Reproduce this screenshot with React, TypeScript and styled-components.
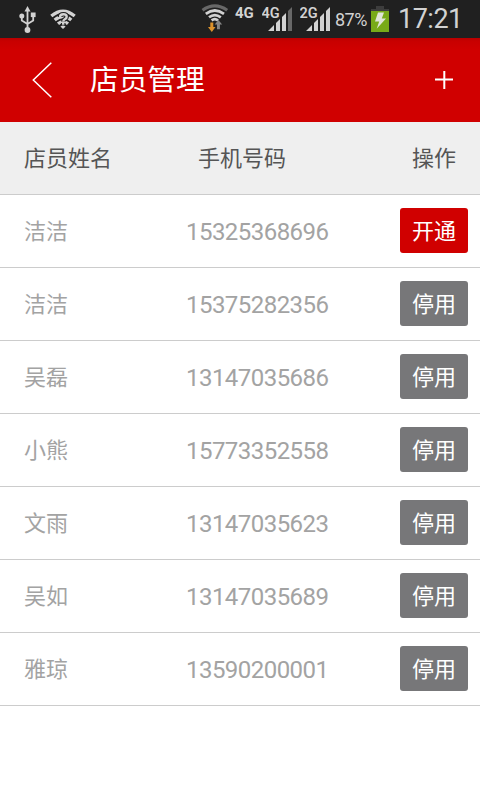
import React from "react";
import styled, { createGlobalStyle } from "styled-components";

const Global = createGlobalStyle`
  * { box-sizing: border-box; }
  body { margin: 0; background: #fff; font-family: Roboto, "Noto Sans CJK SC", sans-serif; }
`;

const Screen = styled.div`
  width: 480px;
  height: 800px;
  background: #fff;
  overflow: hidden;
`;

const StatusBar = styled.div`
  height: 38px;
  background: #202020;
  color: #d2d2d2;
  display: flex;
  align-items: flex-start;
  padding-left: 18px;

  svg { display: block; flex: none; }
`;

const Spacer = styled.div`
  flex: 0 0 124px;
`;

const Network = styled.span`
  width: 20px;
  margin: 5px 7px 0 6px;
  font: 700 15px/17px Roboto, sans-serif;
`;

const Percent = styled.span`
  width: 36px;
  margin-top: 9px;
  font-size: 18px;
  line-height: 22px;
  letter-spacing: -0.5px;
`;

const Clock = styled.span`
  margin: 3px 0 0 9px;
  font-size: 27px;
  line-height: 33px;
  letter-spacing: -0.5px;
  white-space: nowrap;
`;

const Header = styled.header`
  height: 84px;
  background: linear-gradient(#b80000, #c80000 3px, #d00000 12px);
  color: #fff;
  display: flex;
  align-items: center;
  padding: 0 27px 0 32px;
`;

const IconButton = styled.button`
  display: flex;
  padding: 0;
  border: 0;
  background: none;
  color: inherit;
`;

const Title = styled.h1`
  margin: 0 auto 0 37px;
  font-size: 28.7px;
  font-weight: 400;
  line-height: 84px;
`;

const Row = styled.div<{ $head?: boolean }>`
  height: 73px;
  border-bottom: 1px solid #ccc;
  background: ${(p) => (p.$head ? "#efefef" : "#fff")};
  color: ${(p) => (p.$head ? "#555" : "#a3a3a3")};
  display: grid;
  grid-template-columns: 155px 1fr 68px;
  padding: 0 12px 0 24px;
  align-items: center;
  font-size: 22px;
  line-height: 32px;
`;

const Cell = styled.span<{ $indent?: number }>`
  padding: 2px 0 0 ${(p) => p.$indent ?? 0}px;
`;

const Phone = styled.span`
  padding: 1px 0 0 7px;
  font-size: 24px;
  letter-spacing: -0.54px;
`;

const ActionButton = styled.button<{ $primary?: boolean }>`
  width: 68px;
  height: 45px;
  margin-bottom: 1px;
  padding: 0 0 3px;
  border: 0;
  border-radius: 3px;
  background: ${(p) => (p.$primary ? "#d00000" : "#777779")};
  color: #fff;
  font: 22px/32px "Noto Sans CJK SC", sans-serif;
`;

const UsbIcon = () => (
  <svg width="19" height="38" viewBox="0 0 19 38" fill="none" stroke="#d2d2d2" strokeWidth="1.8">
    <path d="M9.5 10v20M3.8 16v4.5l5.7 3.5M15.2 15v5.5l-5.7 3.5" />
    <g fill="#d2d2d2" stroke="none">
      <path d="M9.5 6l3 5.5h-6z" />
      <circle cx="3.8" cy="16" r="2.5" />
      <path d="M12.8 12.5h4.8v4.6h-4.8z" />
      <circle cx="9.5" cy="30" r="2.9" />
    </g>
  </svg>
);

const WifiQueryIcon = () => (
  <svg width="40" height="38" viewBox="0 0 40 38" fill="none">
    <g stroke="#d2d2d2" strokeWidth="3.3">
      <path d="M14.3 16Q26 6.6 37.7 16" />
      <path d="M17.7 20Q26 13 34.3 20M21 23.8Q26 19.5 31 23.8" />
    </g>
    <path d="M23.4 26.4Q26 24.4 28.6 26.4L26 29z" fill="#d2d2d2" />
    <path d="M23 17q0-2.8 3.4-2.8 3.3 0 3.3 2.5 0 1.5-1.9 2.5-1.5.8-1.5 2.2M26.2 23v1.8" stroke="#202020" strokeWidth="4.6" />
    <path d="M23 17q0-2.8 3.4-2.8 3.3 0 3.3 2.5 0 1.5-1.9 2.5-1.5.8-1.5 2.2M26.2 23v1.8" stroke="#d2d2d2" strokeWidth="2.4" />
  </svg>
);

const WifiIcon = () => (
  <svg width="28" height="38" viewBox="0 0 28 38" fill="none">
    <path d="M1.5 10.2Q13.8 1.6 26.2 10.2" stroke="#686868" strokeWidth="3.2" />
    <g stroke="#d2d2d2" strokeWidth="2.7">
      <path d="M4.8 13.8Q13.8 7.2 23 13.8M8 17.3Q13.8 12.8 19.8 17.3" />
      <path d="M10.6 20.4Q13.8 18 17 20.4" />
    </g>
    <path d="M9.3 22.5h3V27h2.2l-3.7 5-3.8-5h2.3z" fill="#dc922c" />
    <path d="M16 29.2v-4.7h-2.3l3.7-4.4 3.8 4.4h-2.3v4.7z" fill="#858585" />
  </svg>
);

/* Signal bars with the network label over their upper left corner. */
const Signal = ({ label, full }: { label: string; full?: boolean }) => (
  <svg width={full ? 35 : 38} height="38" viewBox={`0 0 ${full ? 35 : 38} 38`}>
    <path d="M6 31h6v-6zM14 31h4V19l-4 4zM20 31h4V13l-4 4z" fill="#d2d2d2" />
    <path d="M26 31h4V7l-4 4z" fill={full ? "#d2d2d2" : "#686868"} />
    <text x="-0.5" y="18" fill="#d2d2d2" stroke="#202020" strokeWidth="2" paintOrder="stroke" fontFamily="Roboto, sans-serif" fontWeight="600" fontSize="14.5">{label}</text>
  </svg>
);

const BatteryIcon = () => (
  <svg width="18" height="38" viewBox="0 0 18 38">
    <path d="M5 6h8v3h5v3H0V9h5z" fill="#3d3d3d" />
    <path d="M0 11h18v21H0z" fill="#78aa18" />
    <path d="M7 12.5h6l-2.2 6H15L5.7 28.8l2.5-7.2H4z" fill="#e0e4d8" />
  </svg>
);

const BackIcon = () => (
  <svg width="21" height="36" viewBox="0 0 21 36" fill="none" stroke="#fff" strokeWidth="1.5">
    <path d="M19.3 .8L1.3 18l18 17.2" />
  </svg>
);

const PlusIcon = () => (
  <svg width="18" height="18" viewBox="0 0 18 18" fill="none" stroke="#fff" strokeWidth="2">
    <path d="M9.3 0v18M0 8.6h18" />
  </svg>
);

const staff = [
  { name: "洁洁", phone: "15325368696", disabled: true },
  { name: "洁洁", phone: "15375282356" },
  { name: "吴磊", phone: "13147035686" },
  { name: "小熊", phone: "15773352558" },
  { name: "文雨", phone: "13147035623" },
  { name: "吴如", phone: "13147035689" },
  { name: "雅琼", phone: "13590200001" },
];

export default function App() {
  return (
    <>
      <Global />
      <Screen>
        <StatusBar>
          <UsbIcon />
          <WifiQueryIcon />
          <Spacer />
          <WifiIcon />
          <Network>4G</Network>
          <Signal label="4G" />
          <Signal label="2G" full />
          <Percent>87%</Percent>
          <BatteryIcon />
          <Clock>17:21</Clock>
        </StatusBar>
        <Header>
          <IconButton aria-label="返回"><BackIcon /></IconButton>
          <Title>店员管理</Title>
          <IconButton aria-label="添加"><PlusIcon /></IconButton>
        </Header>
        <Row $head>
          <Cell>店员姓名</Cell>
          <Cell $indent={19}>手机号码</Cell>
          <Cell $indent={12}>操作</Cell>
        </Row>
        {staff.map((s) => (
          <Row key={s.phone}>
            <Cell>{s.name}</Cell>
            <Phone>{s.phone}</Phone>
            <ActionButton $primary={s.disabled}>{s.disabled ? "开通" : "停用"}</ActionButton>
          </Row>
        ))}
      </Screen>
    </>
  );
}
